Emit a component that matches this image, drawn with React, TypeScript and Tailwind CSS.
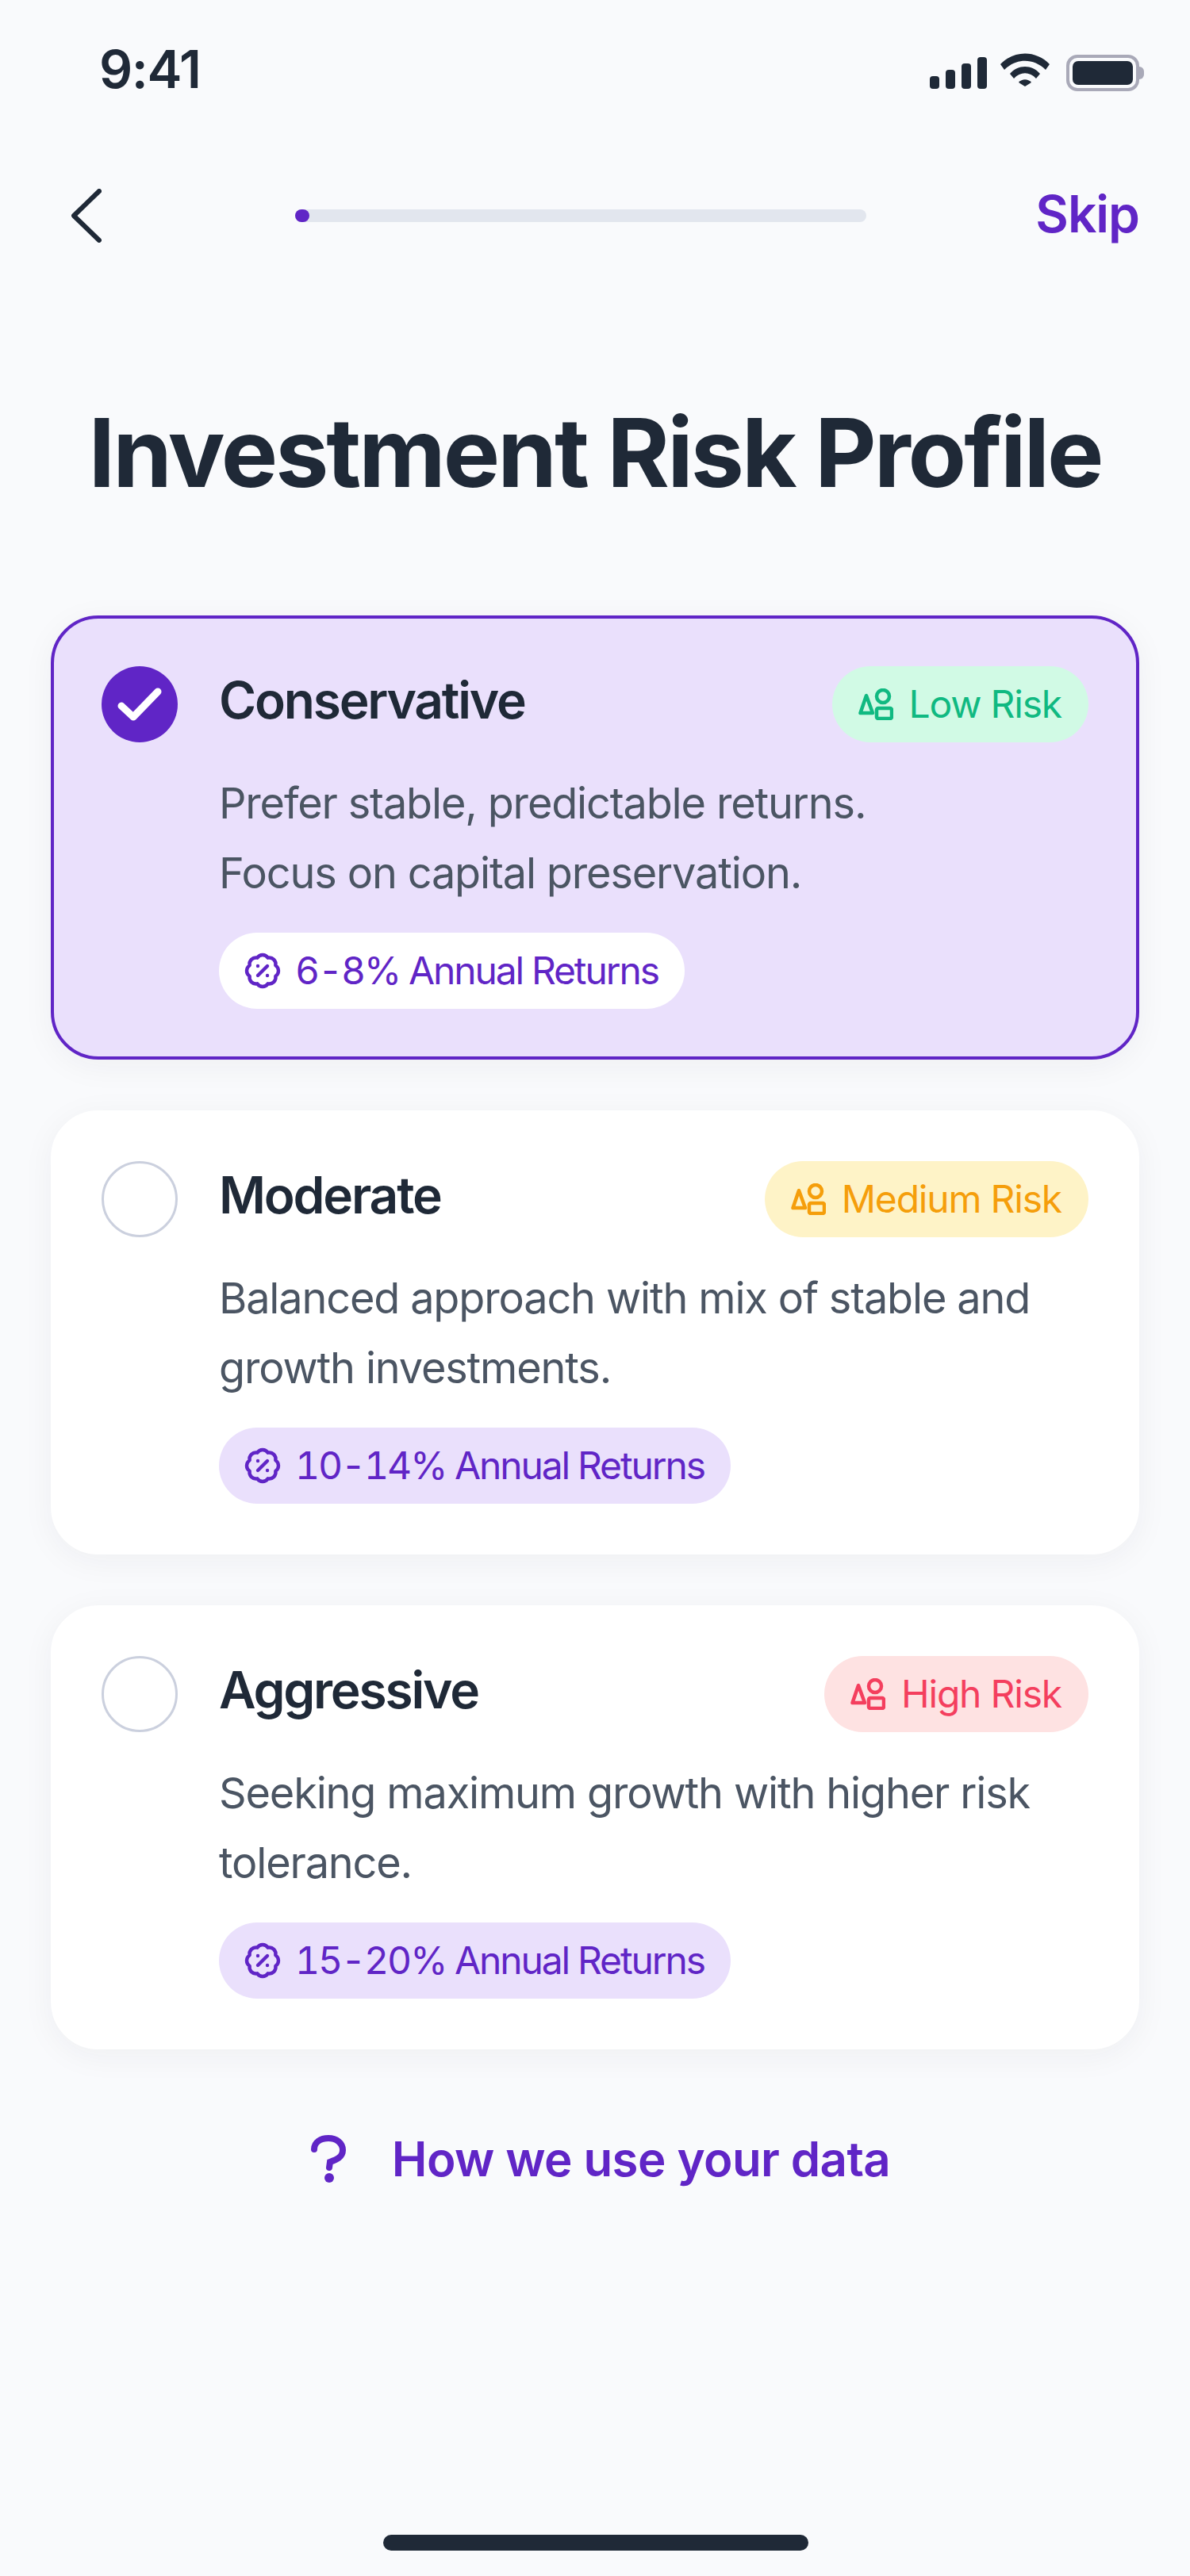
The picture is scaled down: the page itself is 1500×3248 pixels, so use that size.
import { BadgePercent } from "lucide-react";

const PURPLE = "text-[#6025c6]";

function ShapesIcon() {
  return (
    <svg width="44" height="40" viewBox="0 0 44 40" fill="none" stroke="currentColor" strokeWidth="4.5" strokeLinejoin="round" className="shrink-0">
      <path d="M10 9 L2.5 31 H18 Z" />
      <circle cx="31" cy="10" r="8" />
      <rect x="23" y="25" width="19" height="13" rx="2" />
    </svg>
  );
}

type Plan = {
  name: string;
  lines: string[];
  risk: string;
  riskClass: string;
  returns: string;
  selected?: boolean;
};

const plans: Plan[] = [
  {
    name: "Conservative",
    lines: ["Prefer stable, predictable returns.", "Focus on capital preservation."],
    risk: "Low Risk",
    riskClass: "bg-[#d1fae5] text-[#10b981]",
    returns: "6-8% Annual Returns",
    selected: true,
  },
  {
    name: "Moderate",
    lines: ["Balanced approach with mix of stable and", "growth investments."],
    risk: "Medium Risk",
    riskClass: "bg-[#fef3c7] text-[#f59e0b]",
    returns: "10-14% Annual Returns",
  },
  {
    name: "Aggressive",
    lines: ["Seeking maximum growth with higher risk", "tolerance."],
    risk: "High Risk",
    riskClass: "bg-[#fee2e2] text-[#f43f5e]",
    returns: "15-20% Annual Returns",
  },
];

function PlanCard({ plan }: { plan: Plan }) {
  const { selected } = plan;
  return (
    <div
      className={`flex h-[560px] gap-[53px] rounded-[60px] p-[60px] shadow-[0_8px_40px_rgba(31,41,55,0.05)] border-[4px] ${
        selected ? "bg-[#eae0fc] border-[#6025c6]" : "bg-white border-white"
      }`}
    >
      {selected ? (
        <div className="flex h-[96px] w-[96px] shrink-0 items-center justify-center rounded-full bg-[#6025c6]">
          <svg width="56" height="44" viewBox="0 0 56 44" fill="none" stroke="white" strokeWidth="9" strokeLinecap="round" strokeLinejoin="round">
            <path d="M5 24 L20 38 L51 6" />
          </svg>
        </div>
      ) : (
        <div className="h-[96px] w-[96px] shrink-0 rounded-full border-[3px] border-[#cbd0de] bg-white" />
      )}
      <div className="flex min-w-0 flex-1 flex-col">
        <div className="flex h-[96px] items-center justify-between">
          <span className="-mt-[10px] -ml-[1px] text-[64px] font-semibold leading-none tracking-[-2.2px] text-[#1f2937]">{plan.name}</span>
          <span className={`flex h-[96px] items-center gap-[20px] rounded-full pl-[33px] pr-[34px] text-[48px] leading-none tracking-[-1.2px] ${plan.riskClass}`}>
            <ShapesIcon />
            {plan.risk}
          </span>
        </div>
        <p className="mt-[33px] -ml-[1px] text-[54px] leading-[88px] tracking-[-1.15px] text-[#4b5563]">
          {plan.lines[0]}
          <br />
          {plan.lines[1]}
        </p>
        <div className="mt-[31px] -ml-[1px]">
          <span
            className={`inline-flex h-[96px] items-center gap-[17px] rounded-full pl-[31px] pr-[33px] text-[48px] leading-none tracking-[-2.1px] tabular-nums ${PURPLE} ${
              selected ? "bg-white" : "bg-[#eae0fc]"
            }`}
          >
            <BadgePercent size={48} strokeWidth={2.2} className="shrink-0" />
            {plan.returns}
          </span>
        </div>
      </div>
    </div>
  );
}

export default function App() {
  return (
    <div className="flex h-[3248px] w-[1500px] flex-col bg-[#f9fafc] font-['Inter',sans-serif]">
      {/* status bar */}
      <div className="flex h-[115px] items-end justify-between pl-[125px] pr-[58px]">
        <span className="mb-[-5px] text-[66px] font-semibold leading-none text-[#1f2937] tracking-[-1.4px]">9:41</span>
        <div className="flex items-end gap-[16px]">
          <div className="mr-[4px] flex items-end gap-[8px] pb-[3px] -translate-x-[2px]">
            <div className="h-[16px] w-[12px] rounded-[4px] bg-[#1f2937]" />
            <div className="h-[24px] w-[12px] rounded-[4px] bg-[#1f2937]" />
            <div className="h-[32px] w-[12px] rounded-[4px] bg-[#1f2937]" />
            <div className="h-[40px] w-[12px] rounded-[4px] bg-[#1f2937]" />
          </div>
          <svg width="62" height="42" viewBox="0 0 62 42" className="mb-[6px] -translate-x-[5px]" fill="#1f2937">
            <path d="M0 14 C17 -4 45 -4 62 14 L57 21 C42 6 20 6 5 21 Z" />
            <path d="M12 26 C22 14 40 14 50 26 L45 32 C37 23 25 23 17 32 Z" />
            <path d="M23 37 C27 32 35 32 39 37 L31 42 Z" />
          </svg>
          <div className="flex items-center">
            <div className="h-[46px] w-[92px] rounded-[14px] border-[4px] border-[#a9a9b8] p-[4px]">
              <div className="h-full w-full rounded-[7px] bg-[#1f2937]" />
            </div>
            <div className="h-[16px] w-[6px] rounded-r-full bg-[#a9a9b8]" />
          </div>
        </div>
      </div>

      {/* navigation row */}
      <div className="mt-[121px] flex h-[72px] items-center pl-[90px] pr-[64px]">
        <svg width="38" height="68" viewBox="0 0 38 68" fill="none" stroke="#1f2937" strokeWidth="6" strokeLinecap="round" strokeLinejoin="round" className="shrink-0">
          <path d="M35 3 L3 34 L35 65" />
        </svg>
        <div className="ml-[244px] h-[16px] w-[720px] rounded-full bg-[#e2e6ee]">
          <div className="h-full w-[18px] rounded-full bg-[#6025c6]" />
        </div>
        <span className={`ml-auto -mt-[4px] text-[64px] font-semibold leading-none tracking-[-1px] ${PURPLE}`}>Skip</span>
      </div>

      <h1 className="mt-[203px] text-center text-[120px] font-bold leading-none tracking-[-3px] text-[#1f2937]">
        Investment Risk Profile
      </h1>

      {/* plan cards */}
      <div className="mt-[145px] flex flex-col gap-[64px] px-[64px]">
        {plans.map((plan) => (
          <PlanCard key={plan.name} plan={plan} />
        ))}
      </div>

      <div className={`mt-[108px] flex items-center justify-center gap-[58px] pl-[14px] ${PURPLE}`}>
        <svg width="44" height="60" viewBox="0 0 44 60" fill="none" stroke="currentColor" strokeWidth="8" strokeLinecap="round" className="shrink-0">
          <path d="M4 18 C4 9 12 4 22 4 C32 4 40 10 40 19 C40 28 32 31 24 34 L23 41" />
          <circle cx="23" cy="54" r="6" fill="currentColor" stroke="none" />
        </svg>
        <span className="text-[60px] font-semibold leading-none tracking-[-0.6px]">How we use your data</span>
      </div>

      {/* home indicator */}
      <div className="mt-auto mb-[32px] ml-[2px] self-center h-[20px] w-[536px] rounded-full bg-[#1f2937]" />
    </div>
  );
}
